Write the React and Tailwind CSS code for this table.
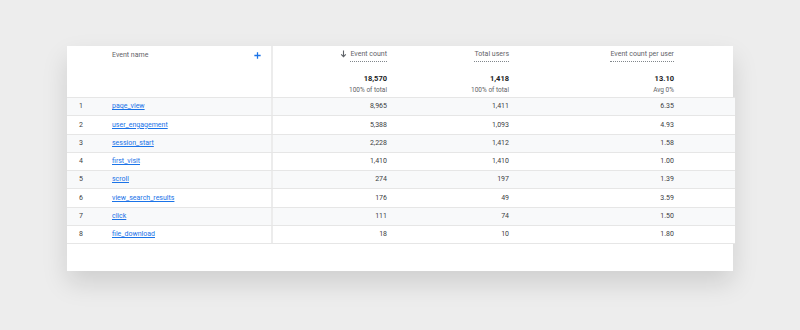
import React from "react";

const rows = [
  ["page_view", "8,965", "1,411", "6.35"],
  ["user_engagement", "5,388", "1,093", "4.93"],
  ["session_start", "2,228", "1,412", "1.58"],
  ["first_visit", "1,410", "1,410", "1.00"],
  ["scroll", "274", "197", "1.39"],
  ["view_search_results", "176", "49", "3.59"],
  ["click", "111", "74", "1.50"],
  ["file_download", "18", "10", "1.80"],
];

function HeaderLabel({ children }) {
  return (
    <span className="border-b border-dotted border-[#80868b] pb-[2px] leading-[9px]">{children}</span>
  );
}

function TotalCol({ width, label, arrow, total, sub }) {
  return (
    <div className={`${width} shrink-0 flex flex-col items-end text-right`}>
      <div className="flex items-start gap-[3px] pt-[4px] text-[7px] text-[#5f6368] h-[27px]">
        {arrow && (
          <svg width="7" height="8" viewBox="0 0 7 8" className="mt-[0px]">
            <path d="M3.5 0.5v6M1.2 4.3l2.3 2.4 2.3-2.4" stroke="#5f6368" strokeWidth="1.1" fill="none" />
          </svg>
        )}
        <HeaderLabel>{label}</HeaderLabel>
      </div>
      <div className="text-[7.5px] font-bold leading-[10px] text-[#202124] mt-[1px]">{total}</div>
      <div className="text-[6.5px] leading-[10px] text-[#5f6368] mt-[1px]">{sub}</div>
    </div>
  );
}

export default function App() {
  return (
    <div
      className="w-[800px] h-[330px] bg-[#ededed] pt-[46px] pl-[67px] text-[#3c4043]"
      style={{ fontFamily: "Roboto, 'Liberation Sans', sans-serif" }}
    >
      <div className="w-[666px] h-[225px] bg-white shadow-[0_12px_24px_rgba(0,0,0,0.13)]">
        <div className="w-[668px]">
          {/* header */}
          <div className="flex h-[52px] border-b border-[#e6e6e6]">
            <div className="w-[206px] flex shrink-0 border-r-2 border-[#ececec]">
              <div className="w-[45px] shrink-0" />
              <div className="flex-1 flex items-start justify-between pr-[9px] pt-[4px] text-[7px] text-[#5f6368] h-[14px] leading-[10px]">
                <span>Event name</span>
                <svg width="9" height="9" viewBox="0 0 10 10" className="mt-[1px]">
                  <path d="M5 1.5v7M1.5 5h7" stroke="#1a73e8" strokeWidth="1.4" />
                </svg>
              </div>
            </div>
            <TotalCol width="w-[114px]" label="Event count" arrow total="18,570" sub="100% of total" />
            <TotalCol width="w-[122px]" label="Total users" total="1,418" sub="100% of total" />
            <TotalCol width="w-[165px]" label="Event count per user" total="13.10" sub="Avg 0%" />
          </div>
          {/* rows */}
          {rows.map((r, i) => (
            <div
              key={i}
              className={`flex h-[18.25px] border-b border-[#e6e6e6] items-stretch text-[7px] ${
                i % 2 === 0 ? "bg-[#f8f9fa]" : "bg-white"
              }`}
            >
              <div className="w-[206px] flex shrink-0 items-center border-r-2 border-[#ececec]">
                <div className="w-[45px] shrink-0 pl-[12px] text-[#3c4043]">{i + 1}</div>
                <a className="text-[#1a73e8] underline underline-offset-[1px]">{r[0]}</a>
              </div>
              <div className="w-[114px] shrink-0 flex items-center justify-end">{r[1]}</div>
              <div className="w-[122px] shrink-0 flex items-center justify-end">{r[2]}</div>
              <div className="w-[165px] shrink-0 flex items-center justify-end">{r[3]}</div>
            </div>
          ))}
        </div>
      </div>
    </div>
  );
}
